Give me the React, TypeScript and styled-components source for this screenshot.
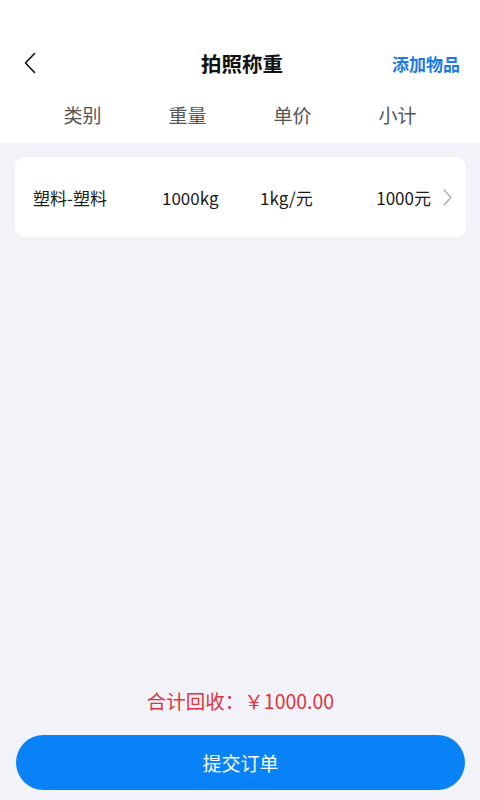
import React from "react";
import styled, { createGlobalStyle } from "styled-components";

const GlobalStyle = createGlobalStyle`
  html, body {
    margin: 0;
    padding: 0;
    background: #f2f3f9;
  }
  body {
    font-family: "Noto Sans CJK SC", "Noto Sans", sans-serif;
  }
`;

const items = [
  { name: "塑料-塑料", weight: "1000kg", price: "1kg/元", subtotal: "1000元" },
];

const columns = ["类别", "重量", "单价", "小计"];

export default function App() {
  return (
    <Page>
      <GlobalStyle />
      <Header>
        <NavBar>
          <BackButton aria-label="返回">
            <svg width="12" height="22" viewBox="0 0 12 22" fill="none">
              <path d="M10.5 1.5 L1.5 11 L10.5 20.5" stroke="#111" strokeWidth="1.6" strokeLinecap="round" strokeLinejoin="round" />
            </svg>
          </BackButton>
          <Title>拍照称重</Title>
          <AddLink>添加物品</AddLink>
        </NavBar>
        <ColumnRow>
          {columns.map((c) => (
            <ColumnLabel key={c}>{c}</ColumnLabel>
          ))}
        </ColumnRow>
      </Header>

      <Content>
        {items.map((item) => (
          <ItemCard key={item.name}>
            <NameCell>{item.name}</NameCell>
            <WeightCell>{item.weight}</WeightCell>
            <PriceCell>{item.price}</PriceCell>
            <SubtotalCell>{item.subtotal}</SubtotalCell>
            <Chevron width="9" height="17" viewBox="0 0 9 17" fill="none">
              <path d="M1 1 L8 8.5 L1 16" stroke="#a8a8ad" strokeWidth="1.2" strokeLinecap="round" strokeLinejoin="round" />
            </Chevron>
          </ItemCard>
        ))}
      </Content>

      <Footer>
        <Total>合计回收：￥1000.00</Total>
        <SubmitButton>提交订单</SubmitButton>
      </Footer>
    </Page>
  );
}

const Page = styled.div`
  min-height: 800px;
  display: flex;
  flex-direction: column;
  background: #f2f3f9;
`;

const Header = styled.header`
  background: #ffffff;
  padding-top: 40px;
`;

const NavBar = styled.div`
  height: 46px;
  display: grid;
  grid-template-columns: 1fr auto 1fr;
  align-items: center;
  padding: 0 20px 0 24px;
`;

const BackButton = styled.button`
  justify-self: start;
  border: none;
  background: none;
  padding: 0;
  display: flex;
  align-items: center;
`;

const Title = styled.h1`
  margin: 0;
  font-size: 20.5px;
  font-weight: 700;
  color: #111;
`;

const AddLink = styled.span`
  justify-self: end;
  font-size: 17px;
  font-weight: 700;
  color: #1a7ae6;
`;

const ColumnRow = styled.div`
  height: 57px;
  display: grid;
  grid-template-columns: repeat(4, 1fr);
  padding: 0 30px;
  align-items: center;
  box-sizing: border-box;
`;

const ColumnLabel = styled.span`
  text-align: center;
  font-size: 19px;
  color: #555;
`;

const Content = styled.main`
  flex: 1;
  padding: 14px 14px 0 15px;
`;

const ItemCard = styled.div`
  height: 80px;
  background: #fff;
  border-radius: 10px;
  display: flex;
  align-items: center;
  padding: 0 14px 0 18px;
  box-sizing: border-box;
  font-size: 17px;
  color: #1a1a1a;
`;

const NameCell = styled.span`
  width: 129px;
`;

const WeightCell = styled.span`
  width: 98px;
`;

const PriceCell = styled.span`
  flex: 1;
`;

const SubtotalCell = styled.span`
  text-align: right;
`;

const Chevron = styled.svg`
  margin-left: 12px;
  flex-shrink: 0;
`;

const Footer = styled.footer`
  display: flex;
  flex-direction: column;
  align-items: center;
  padding: 0 15px 10px 16px;
`;

const Total = styled.div`
  font-size: 19.5px;
  color: #e2333f;
  margin-bottom: 20px;
`;

const SubmitButton = styled.button`
  width: 100%;
  height: 55px;
  border: none;
  border-radius: 28px;
  background: #0a82f7;
  color: #fff;
  font-family: inherit;
  font-size: 19px;
`;
